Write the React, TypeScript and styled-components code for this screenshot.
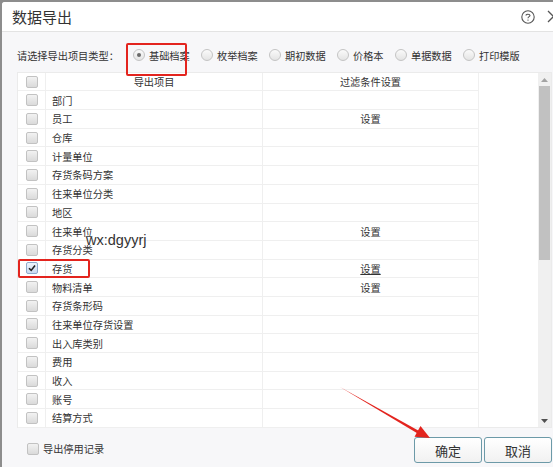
import styled, { createGlobalStyle } from 'styled-components';

const GlobalStyle = createGlobalStyle`
    html, body {
        margin: 0;
        padding: 0;
        background: #8d8d8d;
        overflow: hidden;
    }
    body {
        font-family: "Noto Sans CJK SC", "Noto Sans", sans-serif;
        color: #333;
    }
`;

const Screen = styled.div`
    position: relative;
    width: 553px;
    height: 467px;
    overflow: hidden;
    padding: 2px 0 0 2px;
    box-sizing: border-box;
`;

const Dialog = styled.div`
    width: 570px;
    height: 480px;
    background: #f7f7f9;
    border-top-left-radius: 3px;
    display: flex;
    flex-direction: column;
`;

const TitleBar = styled.div`
    height: 29px;
    flex: none;
    background: #fff;
    border-bottom: 1px solid #e3e3e3;
    display: flex;
    align-items: center;
    padding-left: 10px;
    border-top-left-radius: 3px;
`;

const Title = styled.div`
    font-size: 15px;
    color: #333;
    flex: 1;
    line-height: 1;
`;

const TitleIcons = styled.div`
    display: flex;
    align-items: center;
    gap: 12px;
    margin-right: 12px;
    color: #555;
`;

const TypeRow = styled.div`
    height: 40px;
    flex: none;
    display: flex;
    align-items: center;
    padding: 6px 0 0 15px;
    box-sizing: border-box;
    font-size: 10.2px;
`;

const TypeLabel = styled.span`
    width: 116px;
`;

const RadioItem = styled.label<{ $width: number }>`
    width: ${(p) => p.$width}px;
    display: flex;
    align-items: center;
    gap: 4px;
    flex: none;
`;

const RadioCircle = styled.span<{ $on?: boolean }>`
    width: 10px;
    height: 10px;
    border-radius: 50%;
    border: 1px solid #c4c4c4;
    background: linear-gradient(#fafafa, #e4e4e4);
    display: flex;
    align-items: center;
    justify-content: center;
    flex: none;

    &::after {
        content: '';
        width: 4px;
        height: 4px;
        border-radius: 50%;
        background: ${(p) => (p.$on ? '#6a6a6a' : 'transparent')};
    }
`;

const ListBox = styled.div`
    margin-left: 15px;
    width: 535px;
    height: 356px;
    flex: none;
    background: #fff;
    border: 1px solid #ebebeb;
    box-sizing: border-box;
    display: flex;
`;

const Table = styled.div`
    width: 460px;
    flex: none;
    border-right: 1px solid #f0f0f0;
`;

const Row = styled.div<{ $head?: boolean }>`
    height: ${(p) => (p.$head ? 18.4 : 18.7)}px;
    display: grid;
    grid-template-columns: 28px 217px 1fr;
    border-bottom: 1px solid #efefef;
    box-sizing: border-box;
    font-size: 10.2px;
    color: #333;
`;

const Cell = styled.div<{ $center?: boolean; $divider?: boolean }>`
    display: flex;
    align-items: center;
    justify-content: ${(p) => (p.$center ? 'center' : 'flex-start')};
    padding-left: ${(p) => (p.$center ? 0 : 6)}px;
    border-right: ${(p) => (p.$divider ? '1px solid #efefef' : 'none')};
    white-space: nowrap;
`;

const CheckCell = styled(Cell)`
    justify-content: center;
    padding-left: 0;
    border-right: 1px solid #efefef;
`;

const Box = styled.span<{ $on?: boolean }>`
    width: 10px;
    height: 10px;
    border-radius: 2px;
    border: 1px solid ${(p) => (p.$on ? '#8ea9cc' : '#c2c2c2')};
    background: ${(p) => (p.$on ? 'linear-gradient(#eef4fb, #c9daf0)' : 'linear-gradient(#f2f2f2, #dadada)')};
    display: flex;
    align-items: center;
    justify-content: center;
    flex: none;
`;

const Link = styled.span<{ $hover?: boolean }>`
    text-decoration: ${(p) => (p.$hover ? 'underline' : 'none')};
`;

const Filler = styled.div`
    flex: 1;
`;

const ScrollBar = styled.div`
    width: 13px;
    flex: none;
    background: #f0f0f0;
    display: flex;
    flex-direction: column;
    align-items: center;
`;

const Arrow = styled.div`
    height: 13px;
    flex: none;
    display: flex;
    align-items: center;
    justify-content: center;
`;

const Thumb = styled.div`
    width: 11px;
    height: 174px;
    background: #c1c1c1;
    flex: none;
`;

const Track = styled.div`
    flex: 1;
`;

const Footer = styled.div`
    height: 40px;
    flex: none;
    display: flex;
    align-items: center;
    padding: 0 0 0 25px;
    width: 553px;
    box-sizing: border-box;
    font-size: 10.2px;
`;

const FooterCheck = styled.label`
    display: flex;
    align-items: center;
    gap: 4px;
    flex: 1;
    margin-top: 1px;
`;

const Buttons = styled.div`
    display: flex;
    gap: 2px;
    margin-right: 3px;
    margin-top: 4px;
`;

const Button = styled.button`
    width: 68px;
    height: 26px;
    border: 1px solid #6c9aa8;
    border-radius: 3px;
    background: linear-gradient(#ffffff, #f1f1f1);
    font-family: "Noto Sans CJK SC", sans-serif;
    font-size: 13px;
    color: #333;
    padding: 0;
`;

const Watermark = styled.div`
    position: absolute;
    left: 86px;
    top: 230px;
    font-family: "Liberation Sans", Arial, sans-serif;
    font-size: 14.5px;
    color: #333;
    line-height: 20px;
`;

const Mark = styled.div<{ $x: number; $y: number; $w: number; $h: number }>`
    position: absolute;
    left: ${(p) => p.$x}px;
    top: ${(p) => p.$y}px;
    width: ${(p) => p.$w}px;
    height: ${(p) => p.$h}px;
    border: 2px solid #e3241e;
    border-radius: 2px;
    box-sizing: border-box;
`;

const ArrowSvg = styled.svg`
    position: absolute;
    left: 0;
    top: 0;
    pointer-events: none;
`;

type Item = { name: string; setting?: boolean; checked?: boolean; hover?: boolean };

const items: Item[] = [
    { name: '部门' },
    { name: '员工', setting: true },
    { name: '仓库' },
    { name: '计量单位' },
    { name: '存货条码方案' },
    { name: '往来单位分类' },
    { name: '地区' },
    { name: '往来单位', setting: true },
    { name: '存货分类' },
    { name: '存货', setting: true, checked: true, hover: true },
    { name: '物料清单', setting: true },
    { name: '存货条形码' },
    { name: '往来单位存货设置' },
    { name: '出入库类别' },
    { name: '费用' },
    { name: '收入' },
    { name: '账号' },
    { name: '结算方式' },
];

const types = [
    { label: '基础档案', width: 68, on: true },
    { label: '枚举档案', width: 68 },
    { label: '期初数据', width: 68 },
    { label: '价格本', width: 58 },
    { label: '单据数据', width: 68 },
    { label: '打印模版', width: 68 },
];

const CheckMark = () => (
    <svg width="8" height="8" viewBox="0 0 8 8">
        <path d="M1 4.2 L3.2 6.4 L7 1.4" fill="none" stroke="#222" strokeWidth="1.6" />
    </svg>
);

const App = () => (
    <Screen>
        <GlobalStyle />
        <Dialog>
            <TitleBar>
                <Title>数据导出</Title>
                <TitleIcons>
                    <svg width="14" height="14" viewBox="0 0 14 14">
                        <circle cx="7" cy="7" r="6.2" fill="none" stroke="#555" strokeWidth="1.1" />
                        <path d="M5 5.4 C5 3.9 9 3.9 9 5.4 C9 6.6 7 6.7 7 8.2" fill="none" stroke="#555" strokeWidth="1.1" />
                        <circle cx="7" cy="10.1" r="0.7" fill="#555" />
                    </svg>
                    <svg width="13" height="13" viewBox="0 0 13 13">
                        <path d="M1 1 L12 12 M12 1 L1 12" stroke="#555" strokeWidth="1.3" />
                    </svg>
                </TitleIcons>
            </TitleBar>
            <TypeRow>
                <TypeLabel>请选择导出项目类型：</TypeLabel>
                {types.map((t) => (
                    <RadioItem key={t.label} $width={t.width}>
                        <RadioCircle $on={t.on} />
                        {t.label}
                    </RadioItem>
                ))}
            </TypeRow>
            <ListBox>
                <Table>
                    <Row $head>
                        <CheckCell><Box /></CheckCell>
                        <Cell $center $divider>导出项目</Cell>
                        <Cell $center>过滤条件设置</Cell>
                    </Row>
                    {items.map((it) => (
                        <Row key={it.name}>
                            <CheckCell>
                                <Box $on={it.checked}>{it.checked && <CheckMark />}</Box>
                            </CheckCell>
                            <Cell $divider>{it.name}</Cell>
                            <Cell $center>
                                {it.setting && <Link $hover={it.hover}>设置</Link>}
                            </Cell>
                        </Row>
                    ))}
                </Table>
                <Filler />
                <ScrollBar>
                    <Arrow>
                        <svg width="7" height="4" viewBox="0 0 7 4"><path d="M0 4 L3.5 0 L7 4 Z" fill="#a3a3a3" /></svg>
                    </Arrow>
                    <Thumb />
                    <Track />
                    <Arrow>
                        <svg width="7" height="4" viewBox="0 0 7 4"><path d="M0 0 L3.5 4 L7 0 Z" fill="#505050" /></svg>
                    </Arrow>
                </ScrollBar>
            </ListBox>
            <Footer>
                <FooterCheck>
                    <Box />
                    导出停用记录
                </FooterCheck>
                <Buttons>
                    <Button>确定</Button>
                    <Button>取消</Button>
                </Buttons>
            </Footer>
        </Dialog>
        <Watermark>wx:dgyyrj</Watermark>
        <Mark $x={126} $y={43} $w={61} $h={33} />
        <Mark $x={18} $y={259} $w={72} $h={19} />
        <ArrowSvg width="553" height="467" viewBox="0 0 553 467">
            <path d="M340 387 L420 431.5 L418.5 434 Z" fill="#e3241e" />
            <path d="M430 438 L414.5 436.8 L420.5 426 Z" fill="#e3241e" />
        </ArrowSvg>
    </Screen>
);

export default App;
